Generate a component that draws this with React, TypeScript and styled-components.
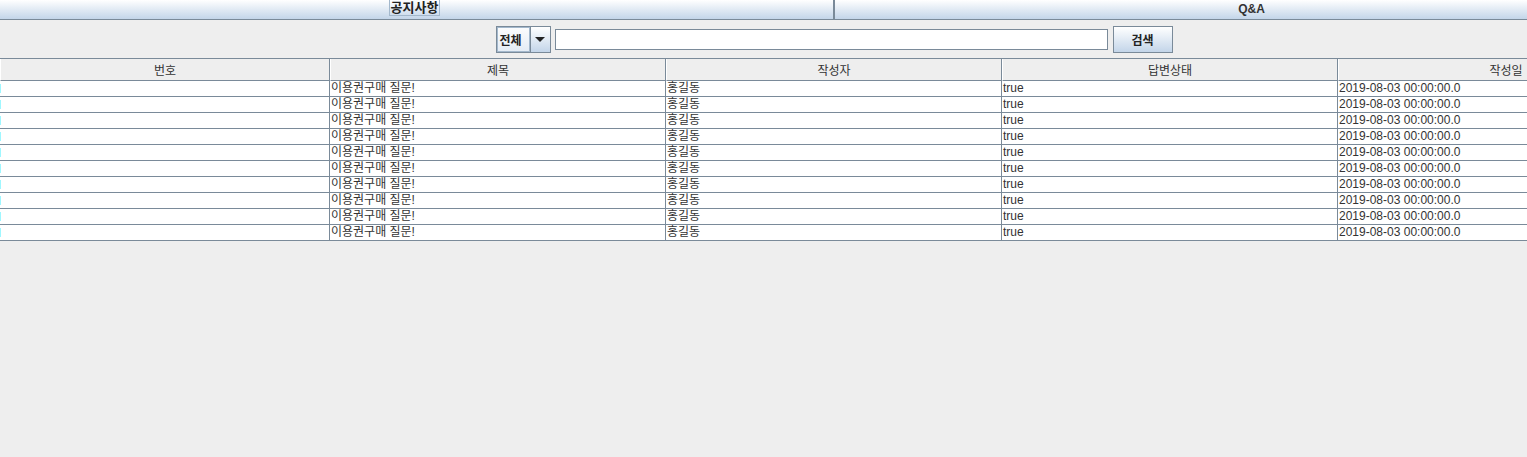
import React from "react";
import styled, { createGlobalStyle } from "styled-components";

const GlobalStyle = createGlobalStyle`
  html, body {
    margin: 0;
    padding: 0;
    background: #eeeeee;
    overflow: hidden;
  }
  body {
    font-family: "Liberation Sans", "Noto Sans CJK KR", sans-serif;
    font-size: 12px;
    color: #333333;
  }
`;

// the Swing frame is wider than the window, so it gets clipped on the right
const Viewport = styled.div`
  width: 100vw;
  overflow: hidden;
`;

const Frame = styled.div`
  width: 1668px;
  display: flex;
  flex-direction: column;
`;

const TabBar = styled.div`
  display: flex;
  height: 19px;
  border-bottom: 1px solid #7a8a99;
`;

const Tab = styled.div<{ last?: boolean }>`
  flex: 1;
  display: flex;
  justify-content: center;
  align-items: flex-start;
  background: linear-gradient(#ffffff, #c3d5e9);
  border-right: ${(p) => (p.last ? "none" : "2px solid #7a8a99")};
  font-weight: bold;
  font-size: 12px;
  line-height: 15px;
  padding-top: 2px;
  box-sizing: border-box;
`;

const FocusLabel = styled.span`
  margin-top: -2px;
  margin-right: 4px;
  padding: 0 1px;
  border: 1px solid #a3b8cc;
  border-top: none;
  font-size: 13px;
  line-height: 15px;
  font-weight: bold;
  color: #222;
`;

const SearchBar = styled.div`
  display: flex;
  justify-content: center;
  align-items: center;
  height: 38px;
  gap: 5px;
`;

const Combo = styled.div`
  display: flex;
  width: 55px;
  height: 27px;
  margin-right: -1px;
  box-sizing: border-box;
  border: 1px solid #7a8a99;
`;

const ComboValue = styled.div`
  flex: 1;
  display: flex;
  align-items: center;
  padding-left: 2px;
  border: 1px solid #a3b8cc;
  background: linear-gradient(#fbfcfd, #e4ecf5);
  font-weight: bold;
  font-size: 12px;
  color: #222;
`;

const ComboArrow = styled.div`
  width: 19px;
  display: flex;
  align-items: center;
  justify-content: center;
  border-left: 1px solid #7a8a99;
  background: linear-gradient(#ffffff, #c3d5e9);
`;

const Triangle = styled.span`
  width: 0;
  height: 0;
  border-left: 5px solid transparent;
  border-right: 5px solid transparent;
  border-top: 5px solid #222;
`;

const TextField = styled.input`
  width: 553px;
  height: 21px;
  box-sizing: border-box;
  border: 1px solid #7a8a99;
  background: #ffffff;
  margin: 0;
  padding: 0 2px;
  outline: none;
`;

const Button = styled.button`
  width: 60px;
  height: 27px;
  box-sizing: border-box;
  border: 1px solid #7a8a99;
  background: linear-gradient(#ffffff, #c3d5e9);
  font-family: "Noto Sans CJK KR", sans-serif;
  font-weight: bold;
  font-size: 12px;
  color: #222;
  padding: 0;
`;

const Table = styled.div`
  display: grid;
  grid-template-columns: 330px 336px 336px 336px 336px;
  width: 1674px;
  border-top: 1px solid #7a8a99;
`;

const HeaderCell = styled.div`
  height: 22px;
  box-sizing: border-box;
  display: flex;
  align-items: center;
  justify-content: center;
  border-right: 1px solid #7a8a99;
  border-bottom: 1px solid #7a8a99;
  border-left: 1px solid #ffffff;
  background: #eeeeee;
  font-family: "Noto Sans CJK KR", sans-serif;
  font-size: 12px;
  color: #333;
`;

const Cell = styled.div`
  height: 16px;
  box-sizing: border-box;
  display: flex;
  align-items: center;
  padding-left: 1px;
  border-right: 1px solid #7a8a99;
  border-bottom: 1px solid #7a8a99;
  background: #ffffff;
  font-size: 12px;
  line-height: 15px;
  color: #333;
  white-space: nowrap;
  overflow: hidden;
`;

const Marker = styled.span`
  display: inline-block;
  width: 1px;
  height: 9px;
  margin-left: -1px;
  background: #9ff7ff;
`;

const headers = ["번호", "제목", "작성자", "답변상태", "작성일"];

const rows = Array.from({ length: 10 }, () => ({
  title: "이용권구매 질문!",
  writer: "홍길동",
  answered: "true",
  date: "2019-08-03 00:00:00.0",
}));

export default function App() {
  return (
    <>
      <GlobalStyle />
      <Viewport>
        <Frame>
          <TabBar>
            <Tab>
              <FocusLabel>공지사항</FocusLabel>
            </Tab>
            <Tab last>Q&amp;A</Tab>
          </TabBar>
          <SearchBar>
            <Combo>
              <ComboValue>전체</ComboValue>
              <ComboArrow>
                <Triangle />
              </ComboArrow>
            </Combo>
            <TextField />
            <Button>검색</Button>
          </SearchBar>
          <Table>
            {headers.map((h) => (
              <HeaderCell key={h}>{h}</HeaderCell>
            ))}
            {rows.map((r, i) => (
              <React.Fragment key={i}>
                <Cell>
                  <Marker />
                </Cell>
                <Cell>{r.title}</Cell>
                <Cell>{r.writer}</Cell>
                <Cell>{r.answered}</Cell>
                <Cell>{r.date}</Cell>
              </React.Fragment>
            ))}
          </Table>
        </Frame>
      </Viewport>
    </>
  );
}
